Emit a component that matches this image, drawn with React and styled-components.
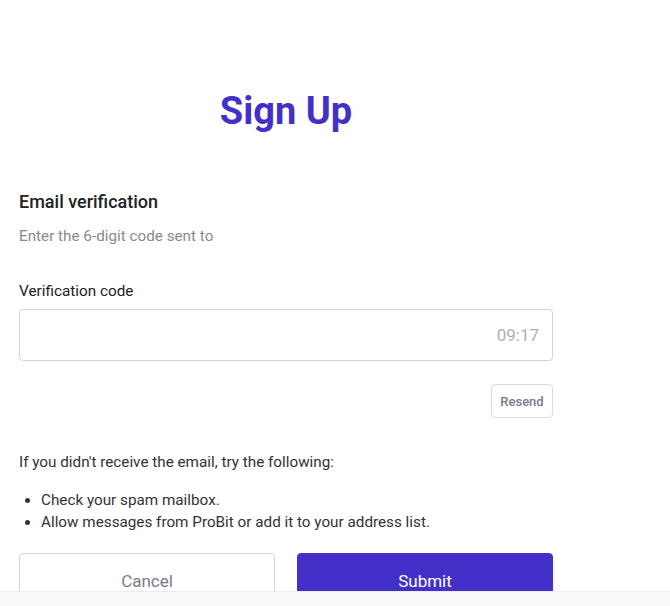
import React from 'react';
import styled, { createGlobalStyle } from 'styled-components';

const GlobalStyle = createGlobalStyle`
	html, body {
		margin: 0;
		padding: 0;
		height: 100%;
		background: #ffffff;
		font-family: 'Roboto', 'Liberation Sans', sans-serif;
	}
	#root {
		height: 100%;
	}
`;

function App() {
	return (
		<>
			<GlobalStyle />
			<Page>
				<Main>
					<Form>
						<Title>Sign Up</Title>
						<Heading>Email verification</Heading>
						<Hint>Enter the 6-digit code sent to</Hint>
						<Label>Verification code</Label>
						<InputBox>
							<Input />
							<Timer>09:17</Timer>
						</InputBox>
						<ResendRow>
							<Resend>Resend</Resend>
						</ResendRow>
						<Text>If you didn't receive the email, try the following:</Text>
						<List>
							<li>Check your spam mailbox.</li>
							<li>Allow messages from ProBit or add it to your address list.</li>
						</List>
						<Actions>
							<Button>Cancel</Button>
							<Button primary>Submit</Button>
						</Actions>
					</Form>
				</Main>
				<Footer />
			</Page>
		</>
	);
}

const Page = styled.div`
	display: flex;
	flex-direction: column;
	height: 100%;
`;
const Main = styled.div`
	flex: 1;
	overflow: hidden;
`;
const Form = styled.div`
	width: 534px;
	margin-left: 19px;
	display: flex;
	flex-direction: column;
`;
const Title = styled.h1`
	margin: 88px 0 0;
	text-align: center;
	font-size: 38px;
	font-weight: 700;
	line-height: 46px;
	color: #4330c9;
`;
const Heading = styled.h2`
	margin: 57px 0 0;
	font-size: 18px;
	font-weight: 500;
	line-height: 22px;
	color: #222;
`;
const Hint = styled.p`
	margin: 14px 0 0;
	font-size: 15.25px;
	line-height: 18px;
	color: #8a8a8a;
`;
const Label = styled.p`
	margin: 36px 0 0;
	font-size: 15.3px;
	line-height: 20px;
	color: #222;
`;
const InputBox = styled.div`
	margin-top: 8px;
	height: 50px;
	border: 1px solid #d4d4d4;
	border-radius: 4px;
	display: flex;
	align-items: center;
	padding: 0 13px 0 14px;
`;
const Input = styled.input`
	flex: 1;
	border: none;
	outline: none;
	font: inherit;
	background: transparent;
`;
const Timer = styled.span`
	font-size: 17px;
	color: #b0b0b0;
`;
const ResendRow = styled.div`
	display: flex;
	justify-content: flex-end;
	margin-top: 23px;
`;
const Resend = styled.button`
	width: 62px;
	height: 34px;
	border: 1px solid #dcdcdc;
	border-radius: 4px;
	background: #fff;
	font-family: inherit;
	font-size: 13px;
	font-weight: 500;
	color: #767d8a;
	padding: 0;
`;
const Text = styled.p`
	margin: 35px 0 0;
	font-size: 15.25px;
	line-height: 18px;
	color: #333;
`;
const List = styled.ul`
	margin: 18px 0 0;
	padding-left: 22px;
	font-size: 15.25px;
	line-height: 22px;
	color: #333;
`;
const Actions = styled.div`
	display: grid;
	grid-template-columns: 1fr 1fr;
	gap: 22px;
	margin-top: 20px;
`;
const Button = styled.button`
	height: 56px;
	border-radius: 4px;
	font-family: inherit;
	font-size: 17px;
	border: 1px solid ${(props) => (props.primary ? '#4330c9' : '#d4d4d4')};
	background: ${(props) => (props.primary ? '#4330c9' : '#fff')};
	color: ${(props) => (props.primary ? '#fff' : '#767d88')};
	padding: 0;
`;
const Footer = styled.div`
	height: 14px;
	flex-shrink: 0;
	background: #fafafa;
	border-top: 1px solid #ececec;
`;

export default App;
